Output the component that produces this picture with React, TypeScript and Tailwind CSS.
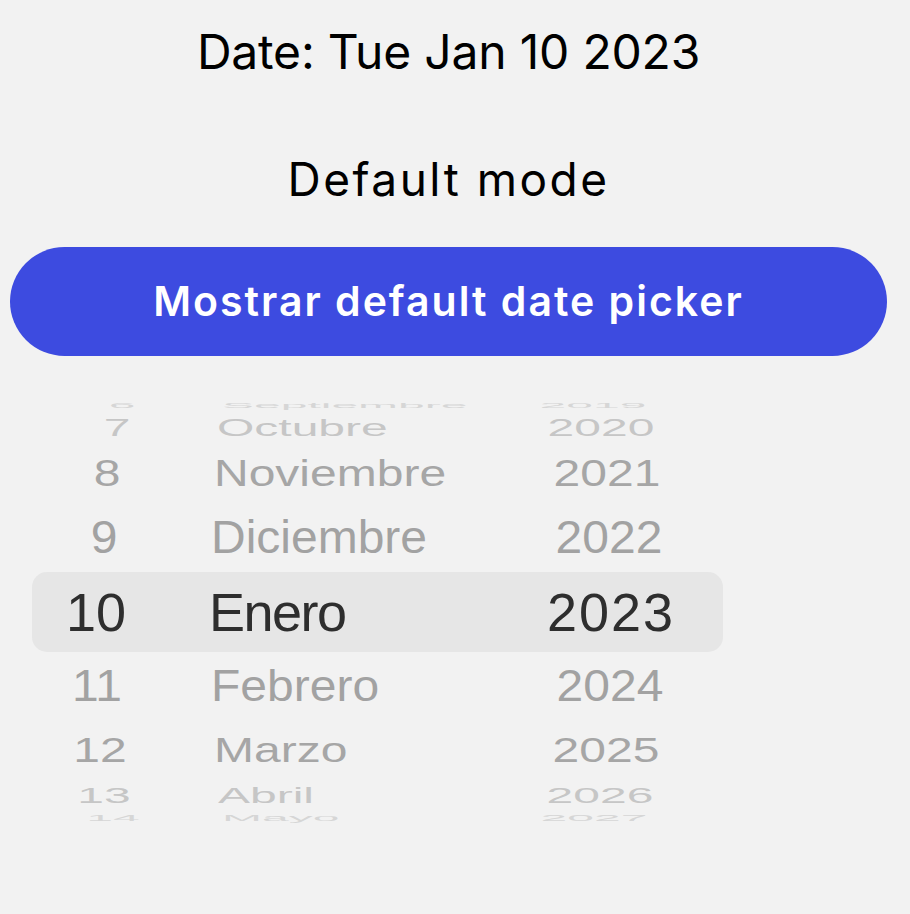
import React from "react";

type Row = {
  day: string;
  month: string;
  year: string;
  h: number;
  sy: number;
  dx: [number, number, number];
  color: string;
  selected?: boolean;
};

const rows: Row[] = [
  { day: "6", month: "Septiembre", year: "2019", h: 11, sy: 0.16, dx: [22, 13, -17], color: "#d6d6d6" },
  { day: "7", month: "Octubre", year: "2020", h: 35, sy: 0.5, dx: [17, 8, -9], color: "#c6c6c6" },
  { day: "8", month: "Noviembre", year: "2021", h: 58, sy: 0.76, dx: [7, 5, -3], color: "#a6a6a6" },
  { day: "9", month: "Diciembre", year: "2022", h: 69, sy: 0.95, dx: [4, 2, -1], color: "#a2a2a2" },
  { day: "10", month: "Enero", year: "2023", h: 80, sy: 1, dx: [-4, 0, 1], color: "#2e2e2e", selected: true },
  { day: "11", month: "Febrero", year: "2024", h: 68, sy: 0.94, dx: [-3, 2, 0], color: "#a2a2a2" },
  { day: "12", month: "Marzo", year: "2025", h: 59, sy: 0.73, dx: [0, 5, -4], color: "#a6a6a6" },
  { day: "13", month: "Abril", year: "2026", h: 32, sy: 0.47, dx: [4, 9, -10], color: "#c6c6c6" },
  { day: "14", month: "Mayo", year: "2027", h: 14, sy: 0.17, dx: [13, 13, -16], color: "#d6d6d6" },
];

function PickerRow({ r }: { r: Row }) {
  const size = r.selected ? "text-[54px]" : "text-[48px]";
  return (
    <div className="flex w-full" style={{ height: r.h }}>
      <div
        className={
          "ml-[32px] flex w-[691px] items-center " +
          (r.selected ? "rounded-[15px] bg-[#e6e6e6]" : "")
        }
      >
        <div className="flex w-[136px] justify-center">
          <div
            className={"leading-none " + size}
            style={{ color: r.color, transform: `translateX(${r.dx[0]}px) scaleY(${r.sy})` }}
          >
            {r.day}
          </div>
        </div>
        <div className="flex w-[342px] pl-[41px]">
          <div
            className={"leading-none whitespace-nowrap " + size + (r.selected ? " tracking-[-1.5px]" : "")}
            style={{ color: r.color, transform: `translateX(${r.dx[1]}px) scaleY(${r.sy})`, transformOrigin: "left center" }}
          >
            {r.month}
          </div>
        </div>
        <div className="flex w-[200px] justify-center">
          <div
            className={"leading-none " + size + (r.selected ? " tracking-[2px]" : "")}
            style={{ color: r.color, transform: `translateX(${r.dx[2]}px) scaleY(${r.sy})` }}
          >
            {r.year}
          </div>
        </div>
      </div>
    </div>
  );
}

export default function App() {
  return (
    <div className="min-h-[914px] w-full bg-[#f2f2f2] pt-[28px]">
      <div className="flex w-[897px] flex-col items-center font-['Inter',sans-serif] text-black">
        <div className="text-[48px] leading-none tracking-[-0.2px]">Date: Tue Jan 10 2023</div>
        <div className="mt-[80px] text-[46px] leading-none tracking-[2.5px]">Default mode</div>
      </div>
      <button className="ml-[10px] mt-[45px] flex h-[109px] w-[877px] items-center justify-center rounded-full bg-[#3d4be0] font-['Inter',sans-serif] text-[41px] font-semibold leading-none tracking-[2px] text-white">
        Mostrar default date picker
      </button>
      <div className="mt-[43px] h-[426px] w-full overflow-hidden font-['Liberation_Sans',Arial,sans-serif]">
        {rows.map((r) => (
          <PickerRow key={r.day} r={r} />
        ))}
      </div>
    </div>
  );
}
